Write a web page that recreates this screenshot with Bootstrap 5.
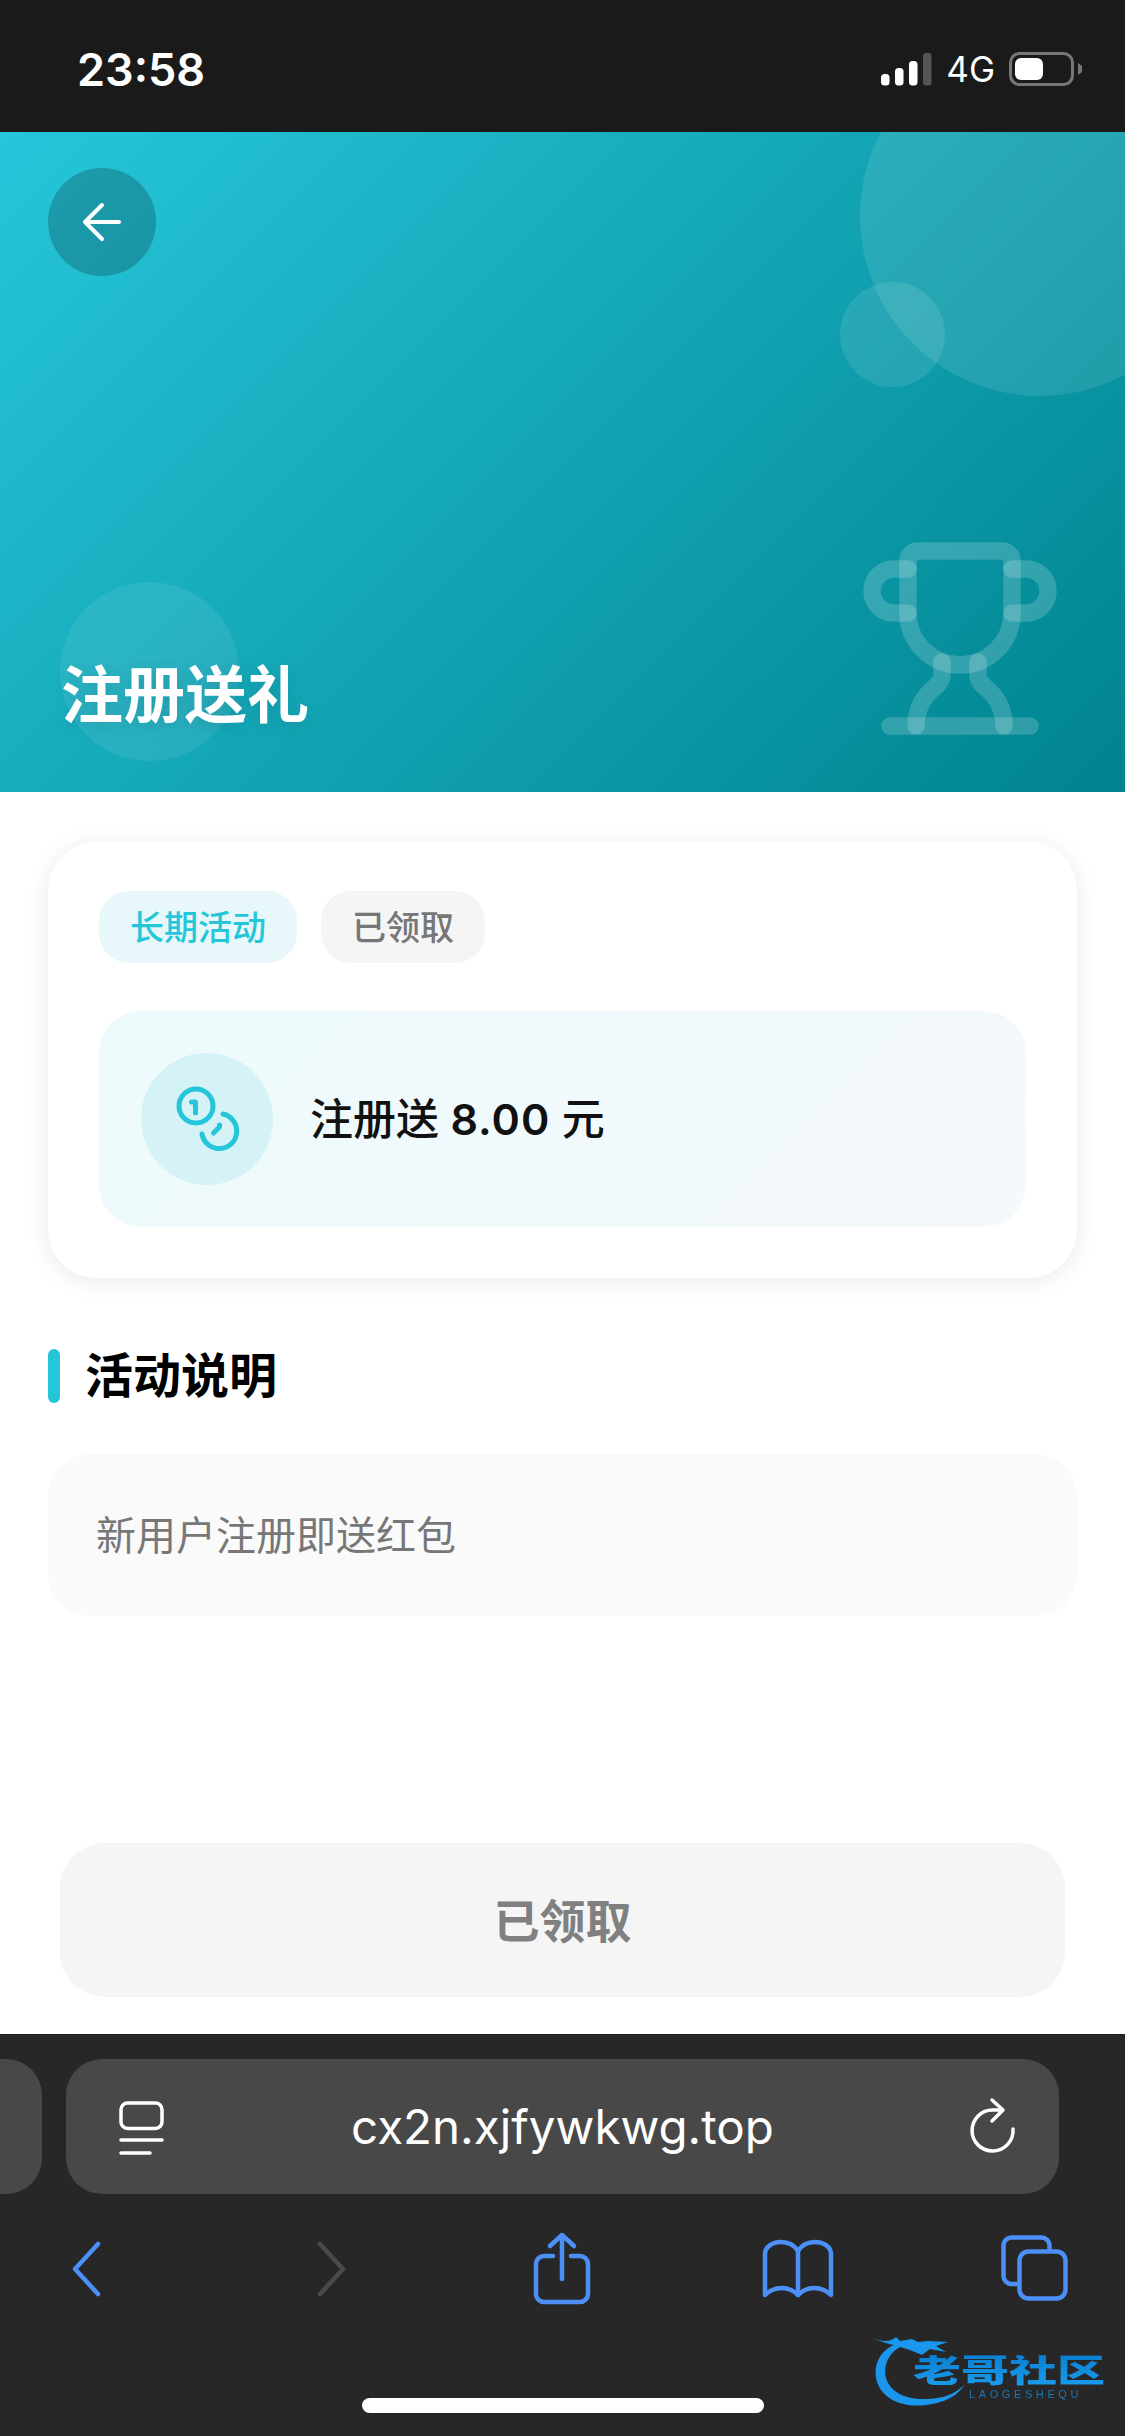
<!DOCTYPE html>
<html lang="zh-CN">
<head>
  <meta charset="UTF-8">
  <meta name="viewport" content="width=device-width, initial-scale=1">
  <title>注册送礼</title>
  <link href="https://cdn.jsdelivr.net/npm/bootstrap@5.3.3/dist/css/bootstrap.min.css" rel="stylesheet">
  <style>
    html, body { background: #fff; margin: 0; }
    .phone {
      width: 1125px; height: 2436px; overflow: hidden;
      font-family: Inter, "Noto Sans CJK SC", sans-serif;
    }
    svg { display: block; flex: none; }

    /* status bar */
    .status-top { height: 132px; background: #1a1a1a; color: #fff; padding: 6px 43px 0 77px; }
    .clock { font-size: 45px; font-weight: 600; line-height: 1; }
    .net-type { font-size: 35px; line-height: 1; margin: 0 14px 0 14px; }

    /* hero */
    .hero-top {
      height: 660px; padding: 36px 0 59px 48px;
      background: linear-gradient(135deg, #26c6da 0%, #00838f 100%);
    }
    .blob { position: absolute; background: rgba(255,255,255,.1); border-radius: 50%; }
    .blob-a { width: 360px; height: 360px; left: 860px; top: -96px; }
    .blob-b { width: 105px; height: 105px; left: 840px; top: 150px; }
    .blob-c { width: 179px; height: 179px; left: 60px; top: 450px; background: rgba(255,255,255,.08); }
    .trophy { position: absolute; left: 820px; top: 368px; }
    .back-round { width: 108px; height: 108px; background: rgba(0,0,0,.2); position: relative; }
    .hero-title {
      position: relative; margin: 0 0 0 13px; color: #fff;
      font-size: 62px; font-weight: 700; line-height: 74px;
      text-shadow: 0 4px 16px rgba(0,0,0,.12);
    }

    /* content */
    .main-part { padding: 50px 48px 37px; min-height: 0; }
    .promo-card {
      border: 0; border-radius: 48px; padding: 49px 51px 51px; height: 436px;
      box-shadow: 0 3px 22px rgba(0,0,0,.09);
    }
    .tag-item { height: 72px; padding: 0 31px; border-radius: 30px; font-size: 34px; font-weight: 500; }
    .tag-on { background: #e8f8fa; color: #26c6da; }
    .tag-off { background: #f5f5f5; color: #777; }
    .reward-box {
      height: 216px; margin-top: 48px; padding-left: 42px; border-radius: 42px;
      background: linear-gradient(135deg, #edfafc 0%, #f5f9fb 100%);
    }
    .coin-round { width: 132px; height: 132px; background: #d5f3f7; margin-right: 37px; }
    .reward-text { font-size: 43px; font-weight: 500; color: #111; line-height: 1; }
    .reward-num { font-weight: 600; letter-spacing: 1px; }
    .sec-head { margin-top: 71px; height: 54px; }
    .sec-bar { width: 12px; height: 54px; border-radius: 6px; background: #26c6da; margin-right: 25px; }
    .sec-title { font-size: 48px; font-weight: 700; color: #000; margin: 0; line-height: 1; }
    .desc-box {
      height: 162px; margin-top: 51px; padding: 1px 0 0 48px; border-radius: 42px;
      background: #fafafa; color: #777; font-size: 40px;
    }
    .claim-btn.btn:disabled {
      display: block; width: 1005px; height: 154px; margin: auto 12px 0; padding-top: 9px; flex: none;
      border: 0; border-radius: 45px; opacity: 1;
      background: #f5f5f5; color: #808080; font-size: 46px; font-weight: 700;
    }

    /* browser chrome */
    .browser-part { height: 402px; background: #272727; padding-top: 24px; border-top: 1px solid #1c1c1c; flex: none; }
    .tab-sliver { width: 42px; height: 135px; background: #484848; border-radius: 0 36px 36px 0; margin-right: 24px; }
    .url-bar {
      width: 993px; height: 135px; background: #484848; border-radius: 36px;
      padding: 0 24px 0 34px; color: #fff;
    }
    .url-text { font-size: 47.500px; line-height: 1; margin-right: 10px; }
    .tool-row { margin-top: 35px; height: 80px; padding-left: 67px; }
    .tool-row .tool-fwd { margin-left: 204px; }
    .tool-row .tool-share { margin-left: 179px; }
    .tool-row .tool-book { margin-left: 164px; }
    .tool-row .tool-tabs { margin-left: 157px; }
    .home-line { width: 402px; height: 15px; background: #fff; border-radius: 8px; margin: 89px auto 0 362px; }

    /* watermark */
    .mark-svg { position: absolute; left: 800px; top: 265px; filter: blur(.5px); }
    .mark-name {
      position: absolute; left: 913px; top: 312px; width: 200px; white-space: nowrap;
      font-size: 48px; line-height: 48px; font-weight: 900; letter-spacing: 0;
      background: linear-gradient(180deg, #0a7fd2, #1a9cec);
      -webkit-background-clip: text; background-clip: text; color: transparent;
      transform: scaleY(.66); filter: blur(.6px);
    }
    .mark-sub {
      position: absolute; left: 969px; top: 354px; white-space: nowrap;
      font-family: "Liberation Sans", sans-serif; font-size: 11px; line-height: 11px;
      letter-spacing: 3.6px; color: #1878b8; filter: blur(.3px);
    }
  </style>
</head>
<body>
<div class="phone d-flex flex-column">

  <div class="status-top d-flex align-items-center justify-content-between flex-none">
    <span class="clock">23:58</span>
    <div class="d-flex align-items-center">
      <svg width="51" height="33" viewBox="0 0 51 33">
        <rect x="0" y="21" width="8.500" height="11.500" rx="3.500" fill="#fff"/>
        <rect x="14" y="15" width="8.500" height="17.500" rx="3.500" fill="#fff"/>
        <rect x="28" y="8" width="8.500" height="24.500" rx="3.500" fill="#fff"/>
        <rect x="42" y="0" width="8.500" height="32.500" rx="3" fill="#555"/>
      </svg>
      <span class="net-type">4G</span>
      <svg width="73" height="34" viewBox="0 0 73 34">
        <rect x="1.500" y="1.500" width="62" height="31" rx="9" fill="none" stroke="#777" stroke-width="3"/>
        <rect x="6" y="6" width="28" height="22" rx="6" fill="#fff"/>
        <path d="M69 11 l4 3 v6 l-4 3 z" fill="#777"/>
      </svg>
    </div>
  </div>

  <div class="hero-top position-relative overflow-hidden d-flex flex-column justify-content-between align-items-start flex-none">
    <span class="blob blob-a"></span>
    <span class="blob blob-b"></span>
    <span class="blob blob-c"></span>
    <svg class="trophy" width="260" height="260" viewBox="0 0 260 260" fill="none" stroke="#fff" stroke-opacity=".18" stroke-width="17.500" stroke-linecap="round">
      <path d="M88 113 V61 a10 10 0 0 1 10-10 H182 a10 10 0 0 1 10 10 V113 a52 52 0 0 1 -104 0 Z"/>
      <path d="M88 69 H74 a22 22 0 0 0 0 44 H88"/>
      <path d="M192 69 H206 a22 22 0 0 1 0 44 H192"/>
      <path d="M70 226 H210"/>
      <path d="M122 162 V175 c0 6 -3 9 -7 12 c-10 8 -19 20 -19 39"/>
      <path d="M158 162 V175 c0 6 3 9 7 12 c10 8 19 20 19 39"/>
    </svg>
    <div class="back-round rounded-circle d-flex align-items-center justify-content-center">
      <svg width="40" height="40" viewBox="0 0 40 40" fill="none" stroke="#fff" stroke-width="4" stroke-linecap="round" stroke-linejoin="round">
        <path d="M3 20 H37 M20 3 L3 20 L20 37"/>
      </svg>
    </div>
    <h1 class="hero-title">注册送礼</h1>
  </div>

  <div class="main-part d-flex flex-column flex-grow-1">
    <div class="card promo-card flex-none">
      <div class="d-flex gap-4">
        <span class="tag-item tag-on d-flex align-items-center">长期活动</span>
        <span class="tag-item tag-off d-flex align-items-center">已领取</span>
      </div>
      <div class="reward-box d-flex align-items-center">
        <div class="coin-round rounded-circle d-flex align-items-center justify-content-center">
          <svg width="100" height="90" viewBox="-3 4 100 90" fill="none" stroke="#26c6da" stroke-width="5" stroke-linecap="round" stroke-linejoin="round">
            <circle cx="36" cy="36" r="17"/>
            <path d="M31.500 32 H35.500 V43"/>
            <path d="M63 44 A17.500 17.500 0 1 1 42 64"/>
            <path d="M53.500 63 L59.500 57 V55"/>
          </svg>
        </div>
        <span class="reward-text">注册送 <span class="reward-num">8.00</span> 元</span>
      </div>
    </div>

    <div class="sec-head d-flex align-items-center flex-none">
      <span class="sec-bar"></span>
      <h2 class="sec-title">活动说明</h2>
    </div>
    <div class="desc-box d-flex align-items-center flex-none">新用户注册即送红包</div>

    <button type="button" class="btn claim-btn" disabled>已领取</button>
  </div>

  <div class="browser-part position-relative">
    <div class="d-flex">
      <div class="tab-sliver"></div>
      <div class="url-bar d-flex align-items-center justify-content-between">
        <svg width="80" height="80" viewBox="0 0 80 80" fill="none" stroke="#fff" stroke-width="3.500" stroke-linecap="round">
          <rect x="21" y="16" width="41" height="25.500" rx="6.500"/>
          <path d="M21 53 H62 M21 66 H50"/>
        </svg>
        <span class="url-text">cx2n.xjfywkwg.top</span>
        <svg width="80" height="80" viewBox="0 0 80 80" fill="none" stroke="#fff" stroke-width="3.500" stroke-linecap="round" stroke-linejoin="round">
          <path d="M58 42 A20.500 20.500 0 1 1 38 23 H47"/>
          <path d="M37 13 L48 23 L37 34"/>
        </svg>
      </div>
    </div>

    <div class="tool-row d-flex align-items-center">
      <svg width="40" height="64" viewBox="0 0 40 64" fill="none" stroke="#4b8ff7" stroke-width="4.500" stroke-linecap="round" stroke-linejoin="round">
        <path d="M31 7 L8 32 L31 57"/>
      </svg>
      <svg class="tool-fwd" width="40" height="64" viewBox="0 0 40 64" fill="none" stroke="#4a4a4a" stroke-width="4.500" stroke-linecap="round" stroke-linejoin="round">
        <path d="M9 7 L32 32 L9 57"/>
      </svg>
      <svg class="tool-share" width="64" height="80" viewBox="0 0 64 80" fill="none" stroke="#4b8ff7" stroke-width="4.500" stroke-linecap="round" stroke-linejoin="round">
        <path d="M23 27 H14 a8 8 0 0 0 -8 8 V65 a8 8 0 0 0 8 8 H50 a8 8 0 0 0 8-8 V35 a8 8 0 0 0 -8-8 H41"/>
        <path d="M32 50 V6 M20 17 L32 6 L44 17"/>
      </svg>
      <svg class="tool-book" width="80" height="68" viewBox="0 0 80 68" fill="none" stroke="#4b8ff7" stroke-width="4.500" stroke-linecap="round" stroke-linejoin="round">
        <path d="M40 16 C36 9.500 29 7 23 7 C14 7 7 12 7 19 V60 C12 55 18 53 24 53 C30 53 36 56 40 60 C44 56 50 53 56 53 C62 53 68 55 73 60 V19 C73 12 66 7 57 7 C51 7 44 9.500 40 16 Z"/>
        <path d="M40 16 V60"/>
      </svg>
      <svg class="tool-tabs" width="80" height="78" viewBox="0 0 80 78" fill="none" stroke="#4b8ff7" stroke-width="4.500" stroke-linecap="round" stroke-linejoin="round">
        <path d="M54.500 19 V15.500 a8 8 0 0 0 -8 -8 H16.500 a8 8 0 0 0 -8 8 V46 a8 8 0 0 0 8 8 H22"/>
        <rect x="24.500" y="21.500" width="46" height="47" rx="9"/>
      </svg>
    </div>

    <div class="home-line"></div>

    <svg class="mark-svg" width="325" height="136" viewBox="0 0 325 136" fill="#1a97ec">
      <path d="M96 44 C80 50 72 66 77 82 C83 100 104 108 126 105 C144 103 158 96 165 84 C156 94 142 99 126 99 C106 100 90 92 86 78 C83 66 88 54 100 47 Z"/>
      <path d="M73 38 C82 42 90 42 96 37 L100 41 L112 39 L118 42 L128 41 L148 42 L136 46 L146 52 L130 49 L122 55 L110 50 L100 47 C92 44 82 43 73 38 Z"/>
    </svg>
    <span class="mark-name">老哥社区</span>
    <span class="mark-sub">LAOGESHEQU</span>
  </div>

</div>
<script src="https://cdn.jsdelivr.net/npm/bootstrap@5.3.3/dist/js/bootstrap.bundle.min.js"></script>
</body>
</html>
